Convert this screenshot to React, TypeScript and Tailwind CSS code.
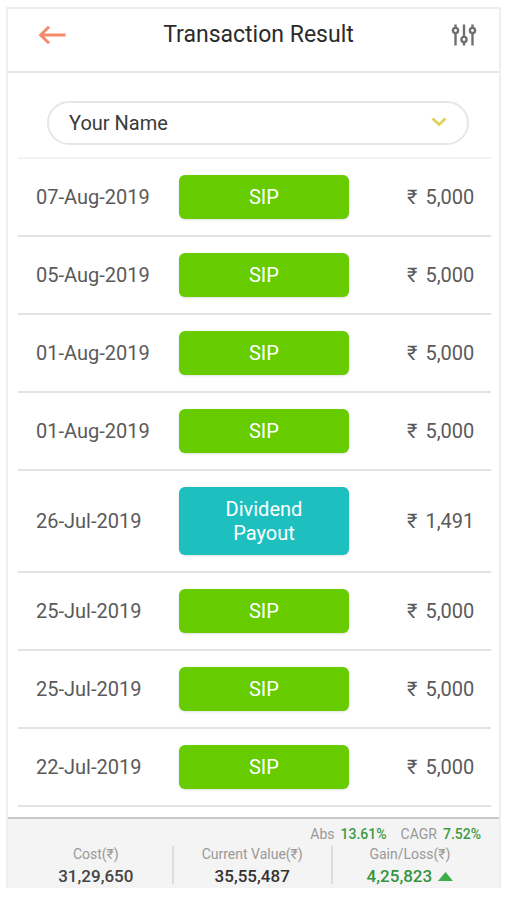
import React, { useState } from 'react';

type TransactionType = 'SIP' | 'Dividend Payout';

interface Transaction {
  id: number;
  date: string;
  type: TransactionType;
  amount: string;
}

const transactions: Transaction[] = [
  { id: 1, date: '07-Aug-2019', type: 'SIP', amount: '5,000' },
  { id: 2, date: '05-Aug-2019', type: 'SIP', amount: '5,000' },
  { id: 3, date: '01-Aug-2019', type: 'SIP', amount: '5,000' },
  { id: 4, date: '01-Aug-2019', type: 'SIP', amount: '5,000' },
  { id: 5, date: '26-Jul-2019', type: 'Dividend Payout', amount: '1,491' },
  { id: 6, date: '25-Jul-2019', type: 'SIP', amount: '5,000' },
  { id: 7, date: '25-Jul-2019', type: 'SIP', amount: '5,000' },
  { id: 8, date: '22-Jul-2019', type: 'SIP', amount: '5,000' },
];

const typeColors: Record<TransactionType, string> = {
  SIP: 'bg-[#66cc00]',
  'Dividend Payout': 'bg-[#1dbfbf]',
};

const BackIcon = () => (
  <svg width="28" height="20" viewBox="0 0 28 20" fill="none" stroke="#f48a6c" strokeWidth="3">
    <path d="M27.500 10H3M11 1.800L2.700 10L11 18.200" />
  </svg>
);

const FilterIcon = () => (
  <svg width="26" height="22" viewBox="0 0 26 22" fill="none" stroke="#707070" strokeWidth="2.4">
    <path d="M4.500 0.500V4M4.500 9V21.500M13 0.500V13M13 18V21.500M21.500 0.500V4M21.500 9V21.500" />
    <circle cx="4.500" cy="6.500" r="2.600" />
    <circle cx="13" cy="15.500" r="2.600" />
    <circle cx="21.500" cy="6.500" r="2.600" />
  </svg>
);

const Header = () => (
  <header className="flex h-16 items-center justify-between border-b-2 border-[#e6e6e6] pr-[22px] pb-2.5 pl-[30px]">
    <button type="button" aria-label="Back">
      <BackIcon />
    </button>
    <h1 className="text-[23px] font-normal text-[#2b2b2b]">Transaction Result</h1>
    <button type="button" aria-label="Filter">
      <FilterIcon />
    </button>
  </header>
);

const NameSelect = () => {
  const [name, setName] = useState('Your Name');

  return (
    <div className="relative mt-7 mr-[30px] ml-[39px]">
      <select
        aria-label="Investor name"
        value={name}
        onChange={(e) => setName(e.target.value)}
        className="h-11 w-full appearance-none rounded-full border-2 border-[#e6e6e6] bg-white px-5 text-xl text-[#3a3a3a]"
      >
        <option>Your Name</option>
      </select>
      <svg
        className="pointer-events-none absolute top-4 right-[22px]"
        width="16"
        height="10"
        viewBox="0 0 16 10"
        fill="none"
        stroke="#e3d160"
        strokeWidth="3"
      >
        <path d="M1.500 1.500L8 7.500L14.500 1.500" />
      </svg>
    </div>
  );
};

const TransactionRow: React.FC<{ transaction: Transaction }> = ({ transaction }) => (
  <tr className="border-b-2 border-[#e2e2e2]">
    <td className="w-[34%] pl-[18px]">{transaction.date}</td>
    <td className="w-[36%] py-4">
      <button
        type="button"
        className={`flex min-h-11 w-full items-center justify-center rounded-md px-9 py-2.5 text-xl leading-6 text-white shadow ${typeColors[transaction.type]}`}
      >
        {transaction.type}
      </button>
    </td>
    <td className="pl-[58px]">
      <span className="flex items-center gap-2 whitespace-nowrap">
        <span>₹</span>
        <span>{transaction.amount}</span>
      </span>
    </td>
  </tr>
);

const Summary = () => (
  <footer className="mt-2.5 border-t-2 border-[#c8c8c8] bg-[#f4f4f4] pt-[5px] text-sm text-[#999]">
    <div className="flex justify-end gap-3.5 pr-[18px]">
      <span className="flex gap-1.5">
        Abs <strong className="font-medium text-[#3d9a45]">13.61%</strong>
      </span>
      <span className="flex gap-1.5">
        CAGR <strong className="font-medium text-[#3d9a45]">7.52%</strong>
      </span>
    </div>
    <div className="flex text-center">
      <div className="w-1/3 pl-3">
        <div>Cost(₹)</div>
        <div className="text-[17px] leading-6 font-medium text-[#444]">31,29,650</div>
      </div>
      <div className="mt-0.5 mb-1 w-0.5 bg-[#dddddd]" />
      <div className="w-[32%]">
        <div>Current Value(₹)</div>
        <div className="text-[17px] leading-6 font-medium text-[#333]">35,55,487</div>
      </div>
      <div className="mt-0.5 mb-1 w-0.5 bg-[#dddddd]" />
      <div className="flex-1 pr-3">
        <div>Gain/Loss(₹)</div>
        <div className="flex items-center justify-center gap-1.5 text-[17px] leading-6 font-medium text-[#35933d]">
          4,25,823
          <svg width="15" height="9" viewBox="0 0 15 9" fill="#3bae47">
            <path d="M0 9L7.500 0L15 9Z" />
          </svg>
        </div>
      </div>
    </div>
  </footer>
);

const App = () => {
  return (
    <div className="min-h-screen bg-white pt-[7px] pr-1.5 pb-3 pl-1.5 font-['Roboto','Noto_Sans',sans-serif]">
      <main className="border-2 border-b-0 border-[#eeeeee]">
        <Header />
        <NameSelect />
        <div className="mt-3 mr-2 ml-2.5">
          <table className="w-full table-fixed border-collapse border-t-2 border-[#f3f3f3] text-xl text-[#5a5a5a]">
            <tbody>
              {transactions.map((transaction) => (
                <TransactionRow key={transaction.id} transaction={transaction} />
              ))}
            </tbody>
          </table>
        </div>
        <Summary />
      </main>
    </div>
  );
};

export default App;
